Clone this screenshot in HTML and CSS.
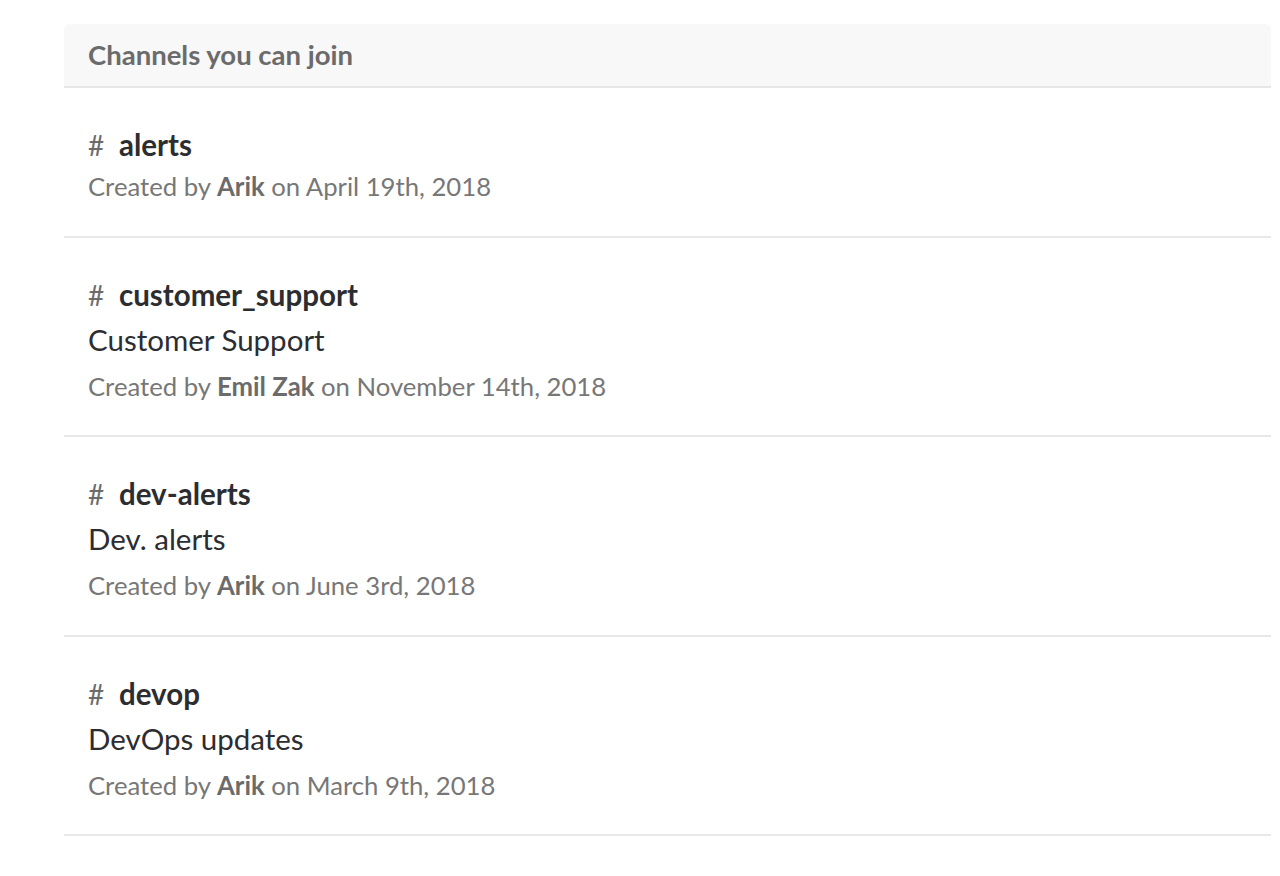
FILE: index.html
```html
<!DOCTYPE html>
<html>
<head>
<meta charset="utf-8">
<link rel="stylesheet" href="styles.css">
</head>
<body>
<div class="panel">
  <div class="panel-header">Channels you can join</div>
  <div class="row">
    <div class="name"><span class="hash">#</span><span class="title">alerts</span></div>
    <div class="meta">Created by <b>Arik</b> on April 19th, 2018</div>
  </div>
  <div class="row">
    <div class="name"><span class="hash">#</span><span class="title">customer_support</span></div>
    <div class="desc">Customer Support</div>
    <div class="meta">Created by <b>Emil Zak</b> on November 14th, 2018</div>
  </div>
  <div class="row">
    <div class="name"><span class="hash">#</span><span class="title">dev-alerts</span></div>
    <div class="desc">Dev. alerts</div>
    <div class="meta">Created by <b>Arik</b> on June 3rd, 2018</div>
  </div>
  <div class="row">
    <div class="name"><span class="hash">#</span><span class="title">devop</span></div>
    <div class="desc">DevOps updates</div>
    <div class="meta">Created by <b>Arik</b> on March 9th, 2018</div>
  </div>
</div>
</body>
</html>
```

FILE: styles.css
```css
html, body {
  margin: 0;
  padding: 0;
  background: #ffffff;
}
body {
  font-family: Lato, "Noto Sans", sans-serif;
  padding: 24px 9px 0 64px;
}
.panel {
  display: flex;
  flex-direction: column;
}
.panel-header {
  background: #f8f8f8;
  border-radius: 6px 6px 0 0;
  border-bottom: 2px solid #e6e6e6;
  height: 62px;
  line-height: 62px;
  padding-left: 24px;
  font-size: 27.5px;
  font-weight: 700;
  color: #6b6b6b;
}
.row {
  padding: 37px 24px 28.5px 24px;
  border-bottom: 2px solid #e8e8e8;
  display: flex;
  flex-direction: column;
}
.name {
  height: 40px;
  line-height: 40px;
  display: flex;
  align-items: center;
}
.hash {
  font-size: 28px;
  color: #6b6b6b;
  width: 31px;
}
.title {
  font-size: 29.5px;
  font-weight: 700;
  color: #2c2d30;
}
.desc {
  height: 50px;
  line-height: 50px;
  font-size: 29.5px;
  color: #2c2d30;
}
.meta {
  height: 42px;
  line-height: 42px;
  font-size: 25.7px;
  color: #777777;
}
.meta b {
  font-weight: 700;
  color: #6b6b6b;
}
```
